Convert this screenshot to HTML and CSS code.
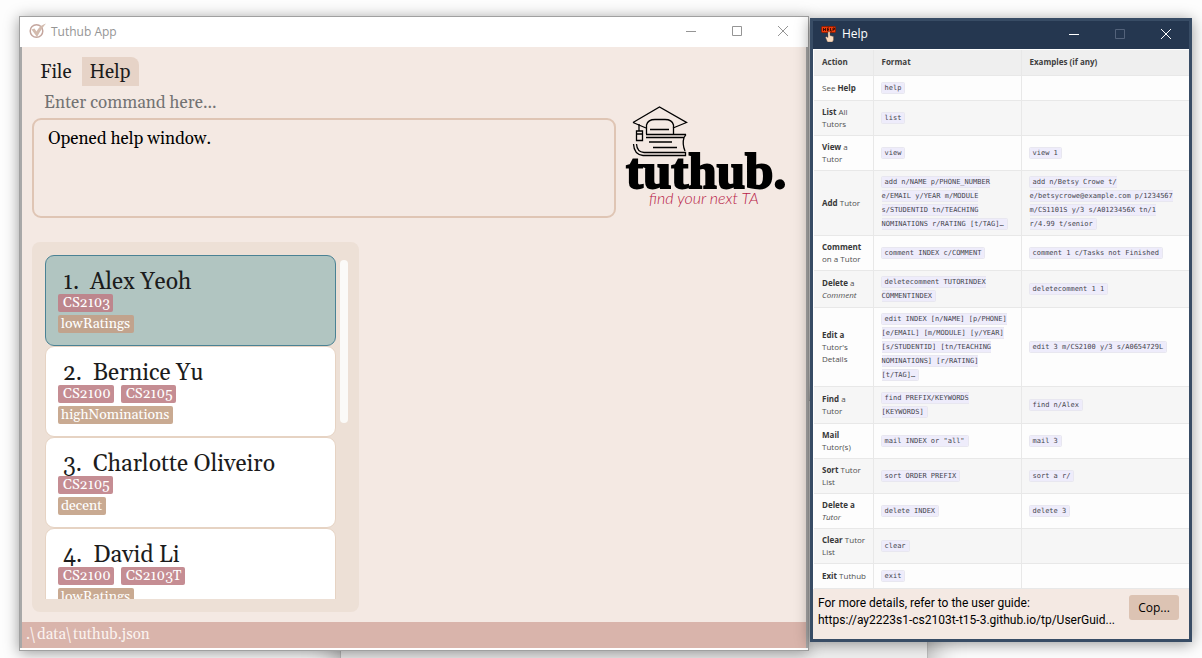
FILE: index.html
```html
<!DOCTYPE html>
<html lang="en">
<head>
<meta charset="utf-8">
<title>Tuthub App</title>
<link rel="stylesheet" href="styles.css">
</head>
<body>
<div class="desktop">
  <div class="backdrop"></div>

  <main class="window app">
    <header class="titlebar">
      <svg class="app-icon" viewBox="0 0 18 16" width="18" height="16" aria-hidden="true">
        <circle cx="7.5" cy="8" r="6.3" fill="none" stroke="#c4a69e" stroke-width="1.5"/>
        <path d="M2.500 6.500L5.500 5.500L7.500 8.500C9.500 5 12 2 17 .5C14 4 11 8.500 8 14Z" fill="#d3bbae"/>
      </svg>
      <h1 class="title">Tuthub App</h1>
      <div class="controls">
        <button class="control" aria-label="Minimize"><svg width="12" height="12"><path d="M1 6.500H11"/></svg></button>
        <button class="control" aria-label="Maximize"><svg width="12" height="12"><path d="M1.500 1.500H10.500V10.500H1.500Z"/></svg></button>
        <button class="control" aria-label="Close"><svg width="12" height="12"><path d="M1 1L11 11M11 1L1 11"/></svg></button>
      </div>
    </header>

    <div class="app-body">
      <nav class="menu">
        <button class="menu-item">File</button>
        <button class="menu-item open">Help</button>
      </nav>
      <input class="command" type="text" aria-label="Command" placeholder="Enter command here...">
      <section class="top">
        <output class="result">Opened help window.</output>
        <svg class="logo" viewBox="0 0 166 112" width="166" height="112" role="img" aria-label="tuthub. find your next TA">
          <g fill="none" stroke="#000" stroke-width="1.300">
            <path d="M9 18.500L35.500 3L62.500 18.500L49 24M9 18.500L22 24"/>
            <path d="M22.500 30V21Q24 15.500 31 15.500H41Q48 15.500 49.500 21V30"/>
            <path d="M26 25.500H45M15 20V27M12.500 27H18.500V36.500H12.500ZM12.500 30H18.500"/>
            <path d="M22 30.500H62M22 33.500H60M60 33.500Q58 40 61 47M62 30.500L60 33.500M9.500 40Q10 50.500 19 51.500H61.500V48.500H20Q13 48 12.500 40"/>
            <path d="M25 38H48M29 43.500H53" stroke-width="1.600"/>
          </g>
          <text class="logo-name" x="2" y="84">tuthub.</text>
          <text class="logo-tag" x="25" y="100">find your next TA</text>
        </svg>
      </section>

      <section class="bottom">
        <div class="panel">
          <ol class="tutors">
            <li class="tutor selected">
              <h2 class="name"><span>1.</span>Alex Yeoh</h2>
              <div class="row"><span class="module">CS2103</span></div>
              <div class="row"><span class="tag">lowRatings</span></div>
            </li>
            <li class="tutor">
              <h2 class="name"><span>2.</span>Bernice Yu</h2>
              <div class="row"><span class="module">CS2100</span><span class="module">CS2105</span></div>
              <div class="row"><span class="tag">highNominations</span></div>
            </li>
            <li class="tutor">
              <h2 class="name"><span>3.</span>Charlotte Oliveiro</h2>
              <div class="row"><span class="module">CS2105</span></div>
              <div class="row"><span class="tag">decent</span></div>
            </li>
            <li class="tutor">
              <h2 class="name"><span>4.</span>David Li</h2>
              <div class="row"><span class="module">CS2100</span><span class="module">CS2103T</span></div>
              <div class="row"><span class="tag">lowRatings</span></div>
            </li>
          </ol>
          <div class="track"><div class="thumb"></div></div>
        </div>
      </section>
      <footer class="status">.\data\tuthub.json</footer>
    </div>
  </main>

  <aside class="window help">
    <header class="titlebar">
      <svg class="help-icon" viewBox="0 0 16 16" width="16" height="16" aria-hidden="true">
        <rect x=".5" y=".5" width="14" height="6" rx="1" fill="#f03c0c" stroke="#8e2106"/>
        <path d="M2.500 2V5M4.500 2V5M2.500 3.500H4.500M8 2H6.500V5H8M6.500 3.500H8M9.500 2V5H11M12 5V2H13.500V3.500H12" fill="none" stroke="#3b0d02" stroke-width=".9"/>
        <path d="M7 6Q8 5 9 6V9.500L12.500 10.500Q13 14 11.500 16H6.500L4.500 11.500Q5 10 7 11.500Z" fill="#fbdcc0" stroke="#6b4a38" stroke-width=".4"/>
      </svg>
      <h1 class="title">Help</h1>
      <div class="controls">
        <button class="control" aria-label="Minimize help"><svg width="12" height="12"><path d="M1 6.500H11"/></svg></button>
        <button class="control" aria-label="Maximize help" disabled><svg width="12" height="12"><path d="M1.500 1.500H10.500V10.500H1.500Z"/></svg></button>
        <button class="control" aria-label="Close help"><svg width="12" height="12"><path d="M1 1L11 11M11 1L1 11"/></svg></button>
      </div>
    </header>
    <div class="sheet">
      <table class="commands">
        <colgroup><col class="c-action"><col class="c-format"><col></colgroup>
        <thead><tr><th>Action</th><th>Format</th><th>Examples (if any)</th></tr></thead>
        <tbody>
          <tr><td>See <b>Help</b></td><td><code>help</code></td><td></td></tr>
          <tr><td><b>List</b> All<br>Tutors</td><td><code>list</code></td><td></td></tr>
          <tr><td><b>View</b> a<br>Tutor</td><td><code>view</code></td><td><code>view 1</code></td></tr>
          <tr><td><b>Add</b> Tutor</td><td><code>add n/NAME p/PHONE_NUMBER<br>e/EMAIL y/YEAR m/MODULE<br>s/STUDENTID tn/TEACHING<br>NOMINATIONS r/RATING [t/TAG]…</code></td><td><code>add n/Betsy Crowe t/<br>e/betsycrowe@example.com p/1234567<br>m/CS1101S y/3 s/A0123456X tn/1<br>r/4.99 t/senior</code></td></tr>
          <tr><td><b>Comment</b><br>on a Tutor</td><td><code>comment INDEX c/COMMENT</code></td><td><code>comment 1 c/Tasks not Finished</code></td></tr>
          <tr><td><b>Delete</b> a<br><i>Comment</i></td><td><code>deletecomment TUTORINDEX<br>COMMENTINDEX</code></td><td><code>deletecomment 1 1</code></td></tr>
          <tr><td><b>Edit a</b><br>Tutor's<br>Details</td><td><code>edit INDEX [n/NAME] [p/PHONE]<br>[e/EMAIL] [m/MODULE] [y/YEAR]<br>[s/STUDENTID] [tn/TEACHING<br>NOMINATIONS] [r/RATING]<br>[t/TAG]…</code></td><td><code>edit 3 m/CS2100 y/3 s/A0654729L</code></td></tr>
          <tr><td><b>Find</b> a<br>Tutor</td><td><code>find PREFIX/KEYWORDS<br>[KEYWORDS]</code></td><td><code>find n/Alex</code></td></tr>
          <tr><td><b>Mail</b><br>Tutor(s)</td><td><code>mail INDEX or "all"</code></td><td><code>mail 3</code></td></tr>
          <tr><td><b>Sort</b> Tutor<br>List</td><td><code>sort ORDER PREFIX</code></td><td><code>sort a r/</code></td></tr>
          <tr><td><b>Delete a</b><br><i>Tutor</i></td><td><code>delete INDEX</code></td><td><code>delete 3</code></td></tr>
          <tr><td><b>Clear</b> Tutor<br>List</td><td><code>clear</code></td><td></td></tr>
          <tr><td><b>Exit</b> Tuthub</td><td><code>exit</code></td><td></td></tr>
        </tbody>
      </table>
    </div>
    <footer class="guide">
      <p class="guide-text">For more details, refer to the user guide:<br>https://ay2223s1-cs2103t-t15-3.github.io/tp/UserGuid...</p>
      <button class="copy">Cop...</button>
    </footer>
  </aside>
</div>
</body>
</html>
```
FILE: styles.css
```css
* { box-sizing: border-box; }
body { margin: 0; background: #fdfdfd; font-family: "Open Sans", sans-serif; }
h1, h2, p, ol { margin: 0; padding: 0; font-weight: 400; }
h1 { font-size: inherit; }
button { border: 0; background: none; padding: 0; font: inherit; color: inherit; }

.desktop {
  position: relative;
  display: grid;
  grid-template-columns: minmax(0, 1fr) 382px;
  grid-template-rows: minmax(0, 1fr);
  height: 100vh;
  min-height: 640px;
  padding: 16px 10px 7px 19px;
  overflow: hidden;
}
.backdrop {
  position: absolute;
  left: 340px;
  right: 274px;
  top: 400px;
  bottom: -20px;
  background: #eee;
  border: 1px solid #bbb;
  box-shadow: 0 0 32px rgba(0, 0, 0, .4);
}
.window { position: relative; display: flex; flex-direction: column; box-shadow: 0 2px 14px rgba(0, 0, 0, .4); }
.titlebar { display: flex; align-items: center; font-size: 12px; flex: none; }
.controls { display: flex; margin-left: auto; }
.control { width: 46px; height: 28px; display: grid; place-items: center; }
.control path { fill: none; stroke: currentColor; }

.app { background: #fff; border: 1px solid #a0a0a0; margin-right: 1px; padding-bottom: 2px; min-height: 0; }
.app .titlebar { height: 30px; padding: 0 2px 2px 9px; color: #959595; }
.app-icon { margin-right: 4px; }
.app-body {
  flex: 1;
  min-height: 0;
  display: flex;
  flex-direction: column;
  background: #f4e9e3;
  border: solid #a8a8a8;
  border-width: 0 2px;
  font-family: Georgia, Gelasio, "Liberation Serif", serif;
  color: #1c1c1c;
}
.menu { display: flex; padding: 10px 10px 0; }
.menu-item { height: 29px; padding: 1px 8px 0; font-size: 19px; margin-right: 2px; }
.menu-item.open { background: #e6d3c7; border-radius: 0 8px 0 0; }
.command {
  height: 32px;
  padding: 2px 22px 0;
  border: 0;
  background: none;
  font: 17px/30px Georgia, Gelasio, "Liberation Serif", serif;
}
.command::placeholder { color: #737373; opacity: 1; }
.top { display: flex; padding-left: 10px; }
.result {
  flex: 1;
  height: 100px;
  padding: 6px 14px;
  border: 2px solid #dfc5b4;
  border-radius: 9px;
  font-size: 17px;
  line-height: 26px;
  color: #000;
}
.logo { flex: none; margin: -14px 16px 0 8px; }
.logo-name { font: bold 51px "Liberation Serif", serif; stroke: #000; stroke-width: 2px; }
.logo-tag { font: italic 300 16px Lato, sans-serif; fill: #b81c48; }

.bottom { flex: 1; min-height: 0; display: grid; grid-template-columns: 3fr 4fr; grid-template-rows: minmax(0, 1fr); padding: 24px 10px 10px; }
.panel { display: flex; min-height: 0; padding: 13px 11px 13px 13px; gap: 4px; background: #ede0d6; border-radius: 8px; }
.tutors { flex: 1; min-height: 0; overflow: hidden; list-style: none; }
.tutor { padding: 12px; border: 1px solid #e6d3c3; border-radius: 9px; background: #fff; }
.tutor.selected { background: #b1c5c1; border-color: #4a8294; }
.name { display: flex; gap: 11px; padding: 4px 0 0 5px; font-size: 23px; line-height: 22px; }
.row { display: flex; gap: 7px; }
.row + .row { margin-top: 3px; }
.module, .tag { height: 18px; border-radius: 2px; font-size: 14px; line-height: 19px; color: #fff; }
.module { padding: 0 3px 0 5px; background: #c58d93; }
.tag { padding: 0 4px 0 3px; background: #c9aa92; }
.selected .module { background: #bd868d; }
.selected .tag { background: #c1a38d; }
.track { width: 8px; padding-top: 5px; }
.thumb { height: 163px; border-radius: 4px; background: #fbfaf8; }
.status { flex: none; height: 26px; padding: 0 4px; background: #d9b4ab; color: #fbf3f0; font-size: 15px; line-height: 26px; }

.help { align-self: start; margin-top: 2px; border: 3px solid #384c65; background: #fff; }
.help .titlebar { height: 28px; padding: 0 0 3px 8px; background: #253750; color: #fff; }
.help-icon { margin-right: 5px; }
.help .control:disabled { color: #53627a; }
.sheet { padding: 1px 0 0 1px; }
.commands { width: 100%; border-collapse: collapse; table-layout: fixed; font-size: 8px; line-height: 12px; color: #505050; }
.c-action { width: 59px; }
.c-format { width: 148px; }
.commands tr { height: 25px; }
.commands tbody tr { background: #fdfdfd; }
.commands tbody tr:nth-child(even) { background: #f6f6f6; }
.commands th, .commands td { padding: 5px 0 5px 8px; border-bottom: 1px solid #e8e8e8; border-right: 1px solid #e8e8e8; text-align: left; white-space: nowrap; }
.commands th { padding: 5px 0 6px 8px; background: #efefef; color: #404040; }
.commands th:last-child, .commands td:last-child { border-right: 0; }
.commands td + td { padding: 4px 0 4px 8px; font: 7px/14px "DejaVu Sans Mono", monospace; }
.commands b { color: #383838; }
.commands code { padding: 1px 3px; border-radius: 1px; background: #eeecfb; box-shadow: 0 0 0 1px #e8e7f0; font: inherit; color: #46464e; }
.guide { display: flex; align-items: flex-start; justify-content: space-between; padding: 6px 10px 10px 5px; background: #f4e9e3; color: #000; font-size: 12px; line-height: 17px; }
.guide-text { min-width: 0; white-space: nowrap; font-family: Roboto, sans-serif; }
.copy { flex: none; width: 50px; height: 25px; border-radius: 3px; background: #dcc3b3; }
```
